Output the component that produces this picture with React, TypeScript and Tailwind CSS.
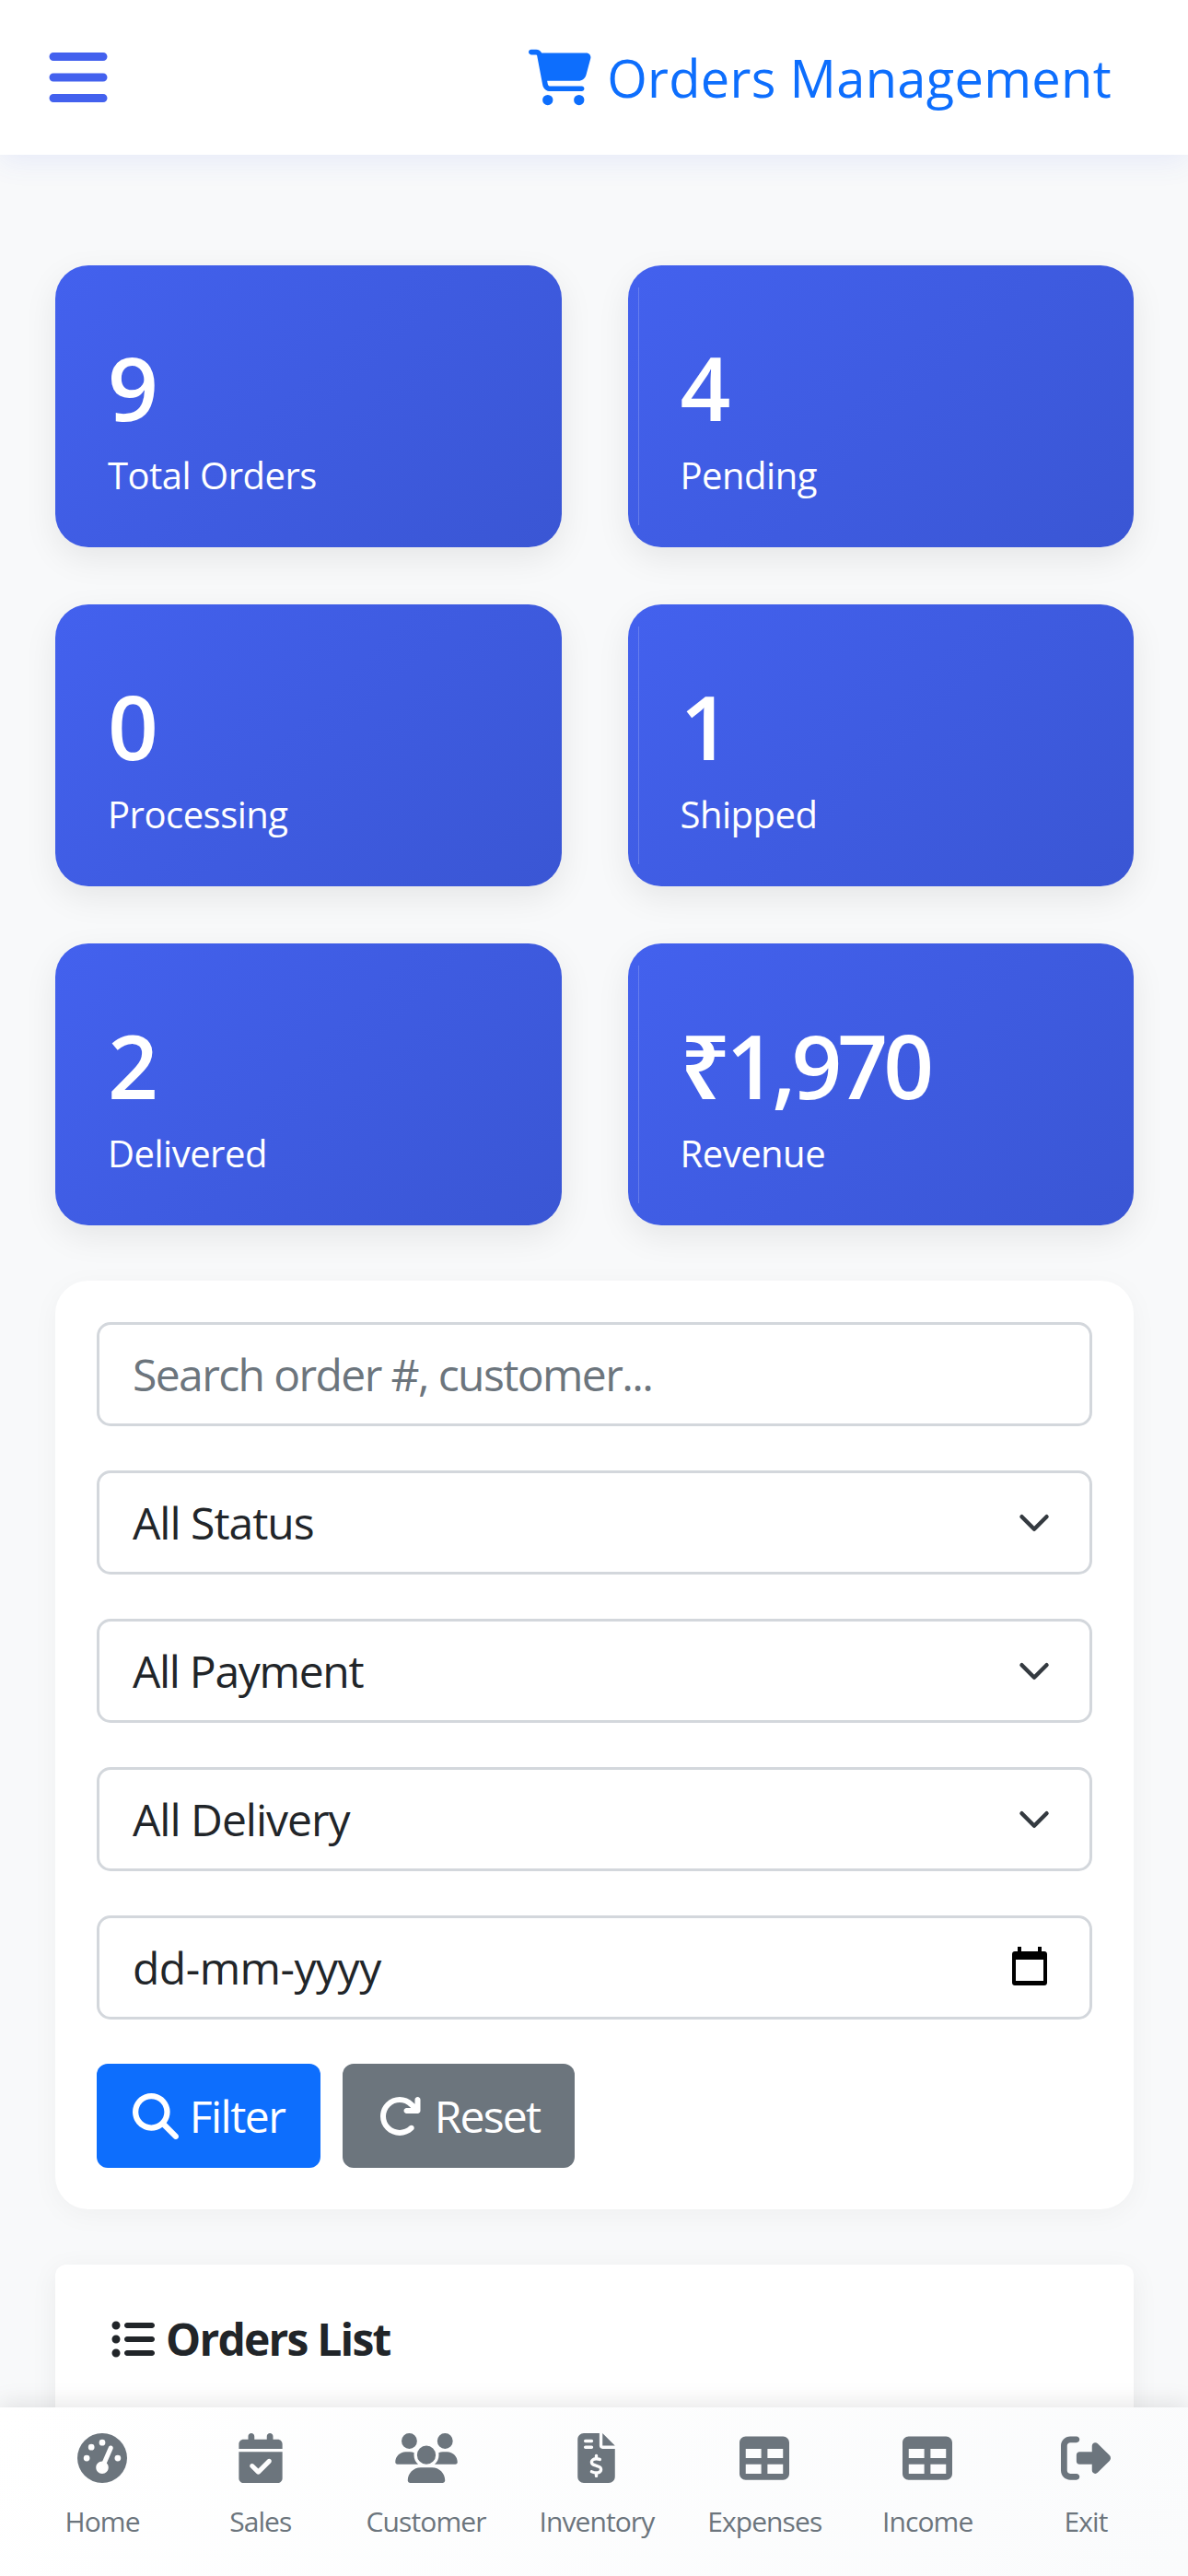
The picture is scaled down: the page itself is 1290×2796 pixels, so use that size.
import React from 'react';
import { FaBars, FaCartShopping, FaMagnifyingGlass, FaArrowRotateRight, FaListUl, FaGaugeHigh, FaCalendarCheck, FaUsers, FaFileInvoiceDollar, FaTable, FaRightFromBracket } from 'react-icons/fa6';

const stats = [
  { value: '9', label: 'Total Orders' },
  { value: '4', label: 'Pending' },
  { value: '0', label: 'Processing' },
  { value: '1', label: 'Shipped' },
  { value: '2', label: 'Delivered' },
  { value: '₹1,970', label: 'Revenue' }
];

const navItems = [
  { label: 'Home', icon: FaGaugeHigh, size: 'w-[54px]' },
  { label: 'Sales', icon: FaCalendarCheck, size: 'w-[48px]' },
  { label: 'Customer', icon: FaUsers, size: 'w-[68px]' },
  { label: 'Inventory', icon: FaFileInvoiceDollar, size: 'w-[41px]' },
  { label: 'Expenses', icon: FaTable, size: 'w-[54px]' },
  { label: 'Income', icon: FaTable, size: 'w-[54px]' },
  { label: 'Exit', icon: FaRightFromBracket, size: 'w-[54px]' }
];

const Chevron = () => (
  <svg className="w-[36px] h-[36px] shrink-0" viewBox="0 0 16 16" fill="none">
    <path d="M2 5l6 6 6-6" stroke="#343a40" strokeWidth="2" strokeLinecap="round" strokeLinejoin="round" />
  </svg>
);

const CalendarIcon = () => (
  <svg className="w-[38px] h-[42px] shrink-0 mb-[4px]" viewBox="0 0 38 42" fill="#000">
    <path
      fillRule="evenodd"
      d="M6 0h4v5h18V0h4v5h3c1.700 0 3 1.300 3 3v31c0 1.700-1.300 3-3 3H3c-1.700 0-3-1.300-3-3V8c0-1.700 1.300-3 3-3h3V0zM4 14v23h30V14H4z"
    />
  </svg>
);

const SelectBox = ({ label, tracking }: { label: string; tracking: string }) => (
  <div className="h-[113px] bg-white border-[3px] border-[#d3d7dc] rounded-[15px] pl-[36px] pr-[42px] flex items-center justify-between text-[48px] text-[#212529]">
    <span className={tracking}>{label}</span>
    <Chevron />
  </div>
);

export default function App() {
  return (
    <div className="relative w-[1290px] h-[2796px] overflow-hidden bg-[#f8f9fa] font-['Open_Sans','Noto_Sans',sans-serif]">
      {/* Header */}
      <header className="h-[168px] bg-white flex items-center justify-between pl-[49px] pr-[83px] shadow-[0_6px_30px_rgba(67,97,238,0.1)]">
        <FaBars className="text-[#4361ee] text-[72px]" />
        <h1 className="flex items-center gap-[17px] text-[#0d6efd] text-[56px] tracking-[0.3px]">
          <FaCartShopping className="text-[68px]" />
          <span>Orders Management</span>
        </h1>
      </header>

      <main className="pl-[60px] pr-[59px] pt-[120px]">
        {/* Stat cards */}
        <div className="grid grid-cols-2 gap-x-[72px] gap-y-[62px]">
          {stats.map((s, i) => (
            <div
              key={s.label}
              className="relative h-[306px] rounded-[36px] bg-linear-135 from-[#4361ee] to-[#3a56d4] pl-[57px] pt-[26px] flex flex-col justify-center text-white shadow-[0_12px_36px_rgba(0,0,0,0.08)]"
            >
              {i % 2 === 1 && <span className="absolute left-[11px] top-[24px] bottom-[24px] w-[1px] bg-white/20" />}
              <div className="text-[96px] font-semibold leading-[115px] tracking-[-5px]">{s.value}</div>
              <div className="text-[40px] leading-[60px] mt-[9px] tracking-[-0.5px]">{s.label}</div>
            </div>
          ))}
        </div>

        {/* Filters */}
        <section className="mt-[60px] bg-white rounded-[36px] p-[45px] shadow-[0_6px_30px_rgba(0,0,0,0.04)] flex flex-col gap-[48px]">
          <input
            placeholder="Search order #, customer..."
            className="h-[113px] bg-white border-[3px] border-[#d3d7dc] rounded-[15px] px-[36px] text-[48px] tracking-[-1.6px] text-[#212529] placeholder:text-[#6c757d] outline-none"
          />
          <SelectBox label="All Status" tracking="tracking-[-1px]" />
          <SelectBox label="All Payment" tracking="tracking-[-1.3px]" />
          <SelectBox label="All Delivery" tracking="tracking-[-1px]" />
          <div className="h-[113px] bg-white border-[3px] border-[#d3d7dc] rounded-[15px] pl-[36px] pr-[46px] flex items-center justify-between text-[48px] text-[#212529]">
            <span className="tracking-[-0.5px]">dd-mm-yyyy</span>
            <CalendarIcon />
          </div>
          <div className="flex gap-[24px]">
            <button className="h-[113px] w-[243px] bg-[#0d6efd] text-white rounded-[12px] flex items-center justify-center gap-[12px] text-[48px] tracking-[-1.5px]">
              <FaMagnifyingGlass className="text-[50px]" />
              <span>Filter</span>
            </button>
            <button className="h-[113px] w-[252px] bg-[#6c757d] text-white rounded-[12px] flex items-center justify-center gap-[14px] text-[48px] tracking-[-1.8px]">
              <FaArrowRotateRight className="text-[48px]" />
              <span>Reset</span>
            </button>
          </div>
        </section>

        {/* Orders list */}
        <section className="mt-[60px] h-[400px] bg-white rounded-[12px] px-[60px] pt-[45px] shadow-[0_6px_30px_rgba(0,0,0,0.06)]">
          <h2 className="flex items-center gap-[12px] text-[#212529] text-[48px] font-bold tracking-[-1.8px]">
            <FaListUl />
            <span>Orders List</span>
          </h2>
        </section>
      </main>

      {/* Bottom nav */}
      <nav className="absolute left-0 right-0 bottom-0 h-[183px] bg-linear-135 from-white to-[#fafbfc] shadow-[0_-4px_24px_rgba(0,0,0,0.1)] flex items-start justify-between px-[54px] pt-[28px]">
        {navItems.map(({ label, icon: Icon, size }) => (
          <div key={label} className="min-w-[114px] flex flex-col items-center text-[#6c757d]">
            <Icon className={`h-[54px] ${size} shrink-0`} />
            <span className="mt-[21px] text-[30px] leading-[42px] tracking-[-0.9px] whitespace-nowrap">{label}</span>
          </div>
        ))}
      </nav>
    </div>
  );
}
